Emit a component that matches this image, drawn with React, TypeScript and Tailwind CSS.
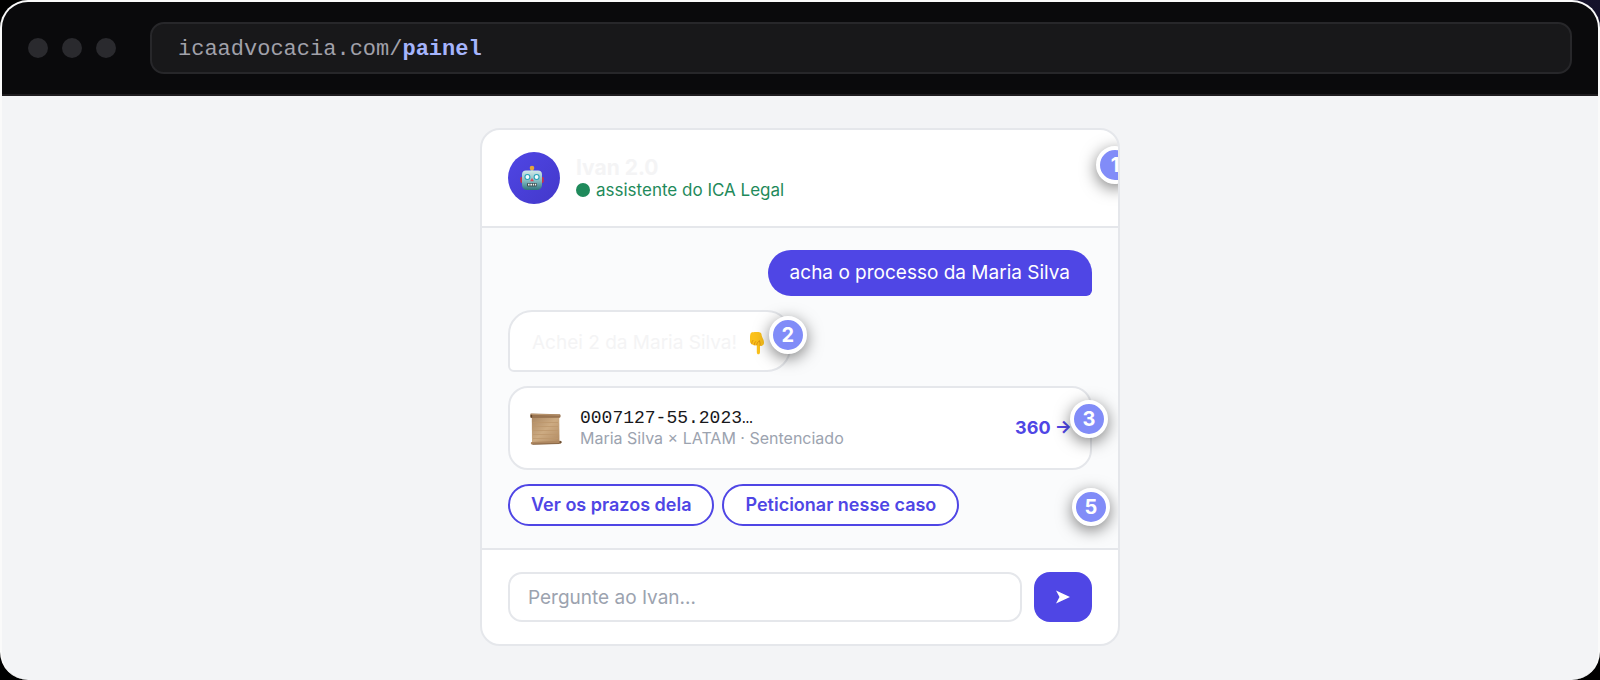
import React, { useState } from 'react';

const chips = ['Ver os prazos dela', 'Peticionar nesse caso'];

const Badge: React.FC<{ n: number; className: string }> = ({ n, className }) => (
  <span
    className={`absolute z-10 flex size-[38px] items-center justify-center rounded-full border-4 border-white bg-[#818cf8] text-xl leading-none font-bold text-white shadow-[0_4px_16px_rgba(0,0,0,0.5)] ${className}`}
  >
    {n}
  </span>
);

const RobotIcon = () => (
  <svg viewBox="0 0 24 26" className="h-[26px] w-6" aria-hidden="true">
    <defs>
      <linearGradient id="face" x1="0" y1="0" x2="0" y2="1">
        <stop offset="0" stopColor="#d3e9ea" />
        <stop offset="0.55" stopColor="#7fb9c0" />
        <stop offset="1" stopColor="#2f747c" />
      </linearGradient>
    </defs>
    <rect x="10.8" y="3" width="2.4" height="4" fill="#8fa9b0" />
    <circle cx="12" cy="3" r="2.3" fill="#e5a63b" />
    <rect x="0.3" y="12" width="3" height="6" rx="1.4" fill="#c8324a" />
    <rect x="20.7" y="12" width="3" height="6" rx="1.4" fill="#c8324a" />
    <path d="M6 5.5h12c2.5 0 4 1.5 4 4V20c0 3-2.5 5-5 5H7c-2.5 0-5-2-5-5V9.5c0-2.500 1.500-4 4-4z" fill="url(#face)" />
    <circle cx="7.4" cy="12" r="3" fill="#28a2b8" />
    <circle cx="16.6" cy="12" r="3" fill="#28a2b8" />
    <circle cx="7.4" cy="12" r="1.9" fill="#f4fdff" />
    <circle cx="16.6" cy="12" r="1.9" fill="#f4fdff" />
    <path d="M12 13l1.900 3.200h-3.800z" fill="#e0475a" />
    <rect x="7" y="18" width="10" height="3.4" rx="1" fill="#3d5054" />
    <path d="M8 18.8h1.600v1.800H8zM10.400 18.800H12v1.800h-1.600zM12.800 18.800h1.400v1.800h-1.400zM15 18.800h1.200v1.800H15z" fill="#eef4f2" />
  </svg>
);

const PointDownIcon = () => (
  <svg viewBox="0 0 16 24" className="h-6 w-4" aria-hidden="true">
    <path
      d="M2.500 1.500C4 .8 9 .7 11.200 1.400c1 .3 1.300 1.600 1.500 3 .3 2 2.300 4.500 2.300 7 0 1.600-.6 3-1.800 3-.5.700-1.600.7-2.200 0v6.600c0 1.500-.6 2.300-1.600 2.300s-1.600-.8-1.600-2.300v-7c-1 .7-2 .6-2.500-.2-1 .5-2.200 0-2.400-1C1.600 12.600 1 11.600 1 10V7c0-2 .2-5 1.500-5.500z"
      fill="#fcc21b"
    />
    <path d="M2.700 12.800c.2-1.600.4-2.500 1.300-3.500M5.300 14c.1-1.600.4-2.600 1.400-3.500M7.800 14c-.1-1.500.4-3 2.700-4M11 14.400c.3-1.400.2-2.600-.5-4.400" fill="none" stroke="#dc8f12" strokeWidth="0.9" strokeLinecap="round" />
  </svg>
);

const ScrollIcon = () => (
  <svg viewBox="0 -1 32 34" className="h-[34px] w-8" aria-hidden="true">
    <defs>
      <linearGradient id="paper" x1="0" y1="0" x2="1" y2="1">
        <stop offset="0" stopColor="#ab8762" />
        <stop offset="0.5" stopColor="#cdab82" />
        <stop offset="1" stopColor="#b18a62" />
      </linearGradient>
    </defs>
    <path d="M1.800 4h27.400l.3 27H2z" fill="url(#paper)" />
    <path d="M3 10.500h25M3 14.500h25M3 18.500h25M3 22.500h25M3 26.500h25" stroke="#bd976c" strokeWidth="0.8" />
    <path d="M.8 1.500l28.900.8c1.200.1 1.200 3.200 0 3.400L1.200 6.100C.2 6 0 1.700.8 1.500z" fill="#987350" />
    <path d="M1.500 2.300l28 .8" stroke="#c09c74" strokeWidth="0.9" />
    <path d="M.6 3h1.500v2.500H.6z" fill="#5f4329" />
    <path d="M1.500 30l29-1.200c1.300.2 1.300 2.600 0 2.900L2 32.600c-1.300-.1-1.600-2.200-.5-2.600z" fill="#ae8760" />
    <path d="M2.500 32.300l27-.8" stroke="#7b5b3b" strokeWidth="0.8" />
    <circle cx="30.500" cy="30.200" r="1.100" fill="#6d4f34" />
  </svg>
);

const App: React.FC = () => {
  const [message, setMessage] = useState('');

  return (
    <div className="bg-linear-to-tr from-black from-50% to-[#15122b] font-['Inter',sans-serif]">
      <div className="flex min-h-screen flex-col overflow-hidden rounded-[28px] border-2 border-b-0 border-[#fafafa] bg-[#f3f4f6]">
        {/* Browser bar */}
        <header className="flex items-center gap-[34px] border-b-2 border-[#1f1d20] bg-[#0a0a0c] px-[26px] py-5">
          <div className="flex gap-[14px]">
            <span className="size-5 rounded-full bg-[#2a2a2e]" />
            <span className="size-5 rounded-full bg-[#2a2a2e]" />
            <span className="size-5 rounded-full bg-[#2a2a2e]" />
          </div>
          <div className="flex h-[52px] flex-1 items-center rounded-[14px] border-2 border-[#27272a] bg-[#18181a] px-[26px] pt-[2px] font-['Liberation_Mono',monospace] text-[22px] text-[#a1a1aa]">
            icaadvocacia.com/<b className="text-[#a5b4fc]">painel</b>
          </div>
        </header>

        <main className="flex flex-1 items-start justify-center px-8 pt-8">
          <section className="w-full max-w-[640px] overflow-hidden rounded-[20px] border-2 border-[#e5e7eb] bg-white">
            {/* Assistant */}
            <div className="relative flex items-center gap-4 border-b-2 border-[#e5e7eb] px-[26px] py-[22px]">
              <div className="flex size-[52px] items-center justify-center rounded-full bg-linear-to-br from-[#4f46e5] to-[#4338ca] pr-1">
                <RobotIcon />
              </div>
              <div className="pt-[2px]">
                <h1 className="text-[21px] leading-[22px] font-bold text-[#f4f4f5]">Ivan 2.0</h1>
                <p className="flex items-center gap-[6px] text-[17px] leading-[22px] text-[#1f8a5b]">
                  <span className="size-[14px] rounded-full bg-[#1f8a5b]" />
                  assistente do ICA Legal
                </p>
              </div>
              <Badge n={1} className="top-4 -right-4" />
            </div>

            {/* Conversation */}
            <div className="flex flex-col items-start gap-[14px] bg-[#fafbfc] px-[26px] py-[22px]">
              <p className="self-end rounded-3xl rounded-br-md bg-[#4f46e5] px-[22px] py-[10px] text-[19px] leading-[26px] text-white">
                acha o processo da Maria Silva
              </p>

              <div className="relative flex items-center gap-3 rounded-3xl rounded-bl-md border-2 border-[#e5e7eb] bg-white pt-[18px] pr-6 pb-[14px] pl-[22px] text-[19px] leading-[26px] text-[#f4f4f5]">
                Achei 2 da Maria Silva! <PointDownIcon />
                <Badge n={2} className="top-1 -right-[18px]" />
              </div>

              <a href="#processo" className="relative flex w-full items-center gap-[18px] rounded-[20px] border-2 border-[#e5e7eb] bg-white py-5 pr-[18px] pl-5">
                <ScrollIcon />
                <div className="flex-1">
                  <div className="font-['Liberation_Mono',monospace] text-lg leading-5 text-[#18181b]">0007127-55.2023…</div>
                  <div className="text-base leading-5 text-[#9ca3af]">Maria Silva × LATAM · Sentenciado</div>
                </div>
                <span className="text-lg font-bold text-[#4f46e5]">360 →</span>
                <Badge n={3} className="top-3 -right-[18px]" />
              </a>

              <div className="relative flex w-full gap-2">
                {chips.map((chip) => (
                  <button key={chip} className="rounded-full border-2 border-[#4f46e5] bg-white px-[21px] py-[6px] text-lg leading-[26px] font-semibold text-[#4f46e5]">
                    {chip}
                  </button>
                ))}
                <Badge n={5} className="top-1 -right-[18px]" />
              </div>
            </div>

            {/* Composer */}
            <form onSubmit={(e) => e.preventDefault()} className="flex gap-3 border-t-2 border-[#e5e7eb] px-[26px] py-[22px]">
              <input
                aria-label="Pergunte ao Ivan"
                value={message}
                onChange={(e) => setMessage(e.target.value)}
                placeholder="Pergunte ao Ivan…"
                className="h-[50px] min-w-0 flex-1 rounded-[14px] border-2 border-[#e5e7eb] bg-white px-[18px] text-[19px] text-gray-900 placeholder:text-[#9ca3af]"
              />
              <button type="submit" aria-label="Enviar" className="flex h-[50px] w-[58px] items-center justify-center rounded-2xl bg-[#4f46e5] text-white">
                <svg viewBox="0 0 14 14" className="size-[14px]" fill="currentColor" aria-hidden="true">
                  <path d="M0 .5L14 7 0 13.500 3.500 7z" />
                </svg>
              </button>
            </form>
          </section>
        </main>
      </div>
    </div>
  );
};

export default App;
